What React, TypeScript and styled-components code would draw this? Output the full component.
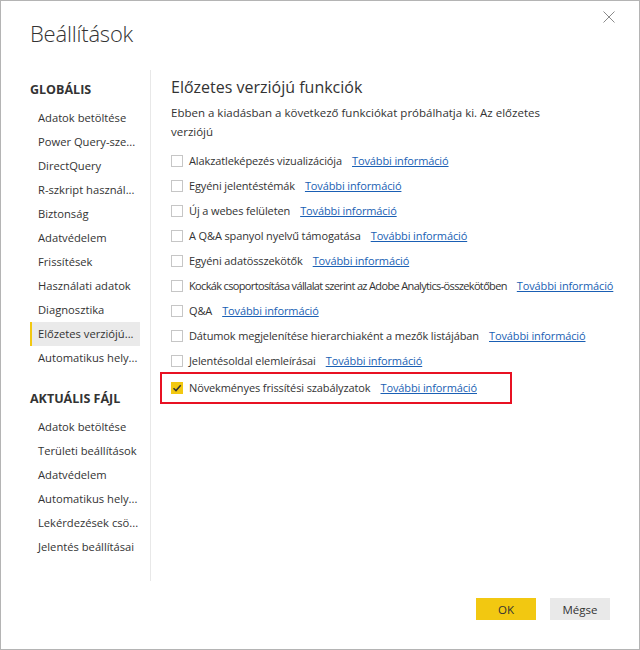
import React from "react";
import styled, { createGlobalStyle } from "styled-components";

const Global = createGlobalStyle`
  html, body { margin: 0; padding: 0; background: #fff; }
  body { font-family: "Open Sans", "Noto Sans", sans-serif; color: #333; }
  * { box-sizing: border-box; }
`;

const Window = styled.div`
  width: 640px;
  height: 650px;
  border: 1px solid #b4b4b4;
  display: flex;
  flex-direction: column;
  background: #fff;
  overflow: hidden;
`;

const Header = styled.div`
  display: flex;
  justify-content: space-between;
  align-items: flex-start;
  height: 69px;
  padding: 17px 22px 0 29px;
`;

const Title = styled.h1`
  margin: 0;
  font-weight: 300;
  font-size: 22px;
  line-height: 30px;
  color: #333;
  letter-spacing: -0.2px;
`;

const Close = styled.button`
  border: 0;
  background: transparent;
  padding: 0;
  margin-top: -9px;
  width: 16px;
  height: 16px;
  display: flex;
  align-items: center;
  justify-content: center;
`;

const Body = styled.div`
  display: flex;
  height: 511px;
`;

const Sidebar = styled.nav`
  flex: none;
  width: 121px;
  margin-left: 29px;
  border-right: 1px solid #e8e8e8;
  padding-top: 8px;
`;

const Section = styled.div`
  font-weight: 700;
  font-size: 12.5px;
  color: #333;
  height: 24px;
  line-height: 24px;
  margin-bottom: 4px;
`;

const NavItem = styled.div<{ $active?: boolean }>`
  height: 24px;
  line-height: 24px;
  font-size: 11.2px;
  padding-left: 6px;
  width: 110px;
  white-space: nowrap;
  color: #333;
  background: ${(p) => (p.$active ? "#eaeaea" : "transparent")};
  border-left: 2px solid ${(p) => (p.$active ? "#f2c811" : "transparent")};
`;

const Group = styled.div`
  margin-bottom: 17px;
`;

const Content = styled.section`
  flex: 1;
  min-width: 0;
  padding: 5px 0 0 20px;
`;

const Heading = styled.h2`
  margin: 0;
  font-weight: 400;
  font-size: 16px;
  line-height: 24px;
  color: #333;
`;

const Desc = styled.p`
  margin: 4px 0 7px;
  font-size: 11.5px;
  line-height: 19px;
  width: 400px;
  color: #333;
`;

const Row = styled.label<{ $highlight?: boolean; $condensed?: boolean }>`
  display: flex;
  align-items: center;
  height: 25px;
  font-size: 11px;
  letter-spacing: ${(p) => (p.$condensed ? "-0.65px" : "-0.12px")};
  color: #333;
  white-space: nowrap;
  width: fit-content;
  ${(p) =>
    p.$highlight
      ? `outline: 2px solid #e81123; margin: 0.5px 0 0 -9px; padding-left: 9px; height: 28px; width: 348px;`
      : ""}
`;

const Box = styled.span<{ $checked?: boolean }>`
  width: 12px;
  height: 12px;
  border: 1px solid ${(p) => (p.$checked ? "#f2c811" : "#c6c6c6")};
  background: ${(p) => (p.$checked ? "#f2c811" : "#fff")};
  margin-right: 6px;
  display: inline-flex;
  align-items: center;
  justify-content: center;
  flex: none;
`;

const Link = styled.a`
  color: #1a5fb4;
  text-decoration: underline;
  margin-left: 10px;
  letter-spacing: -0.12px;
  cursor: pointer;
`;

const Footer = styled.div`
  flex: 1;
  display: flex;
  justify-content: flex-end;
  align-items: flex-start;
  gap: 14px;
  padding: 17px 29px 0 0;
`;

const Button = styled.button<{ $primary?: boolean }>`
  width: 60px;
  height: 22px;
  border: 0;
  font-family: inherit;
  font-size: 11.5px;
  color: #333;
  background: ${(p) => (p.$primary ? "#f2c811" : "#e9e9e9")};
`;

const globalItems = [
  "Adatok betöltése",
  "Power Query-sze...",
  "DirectQuery",
  "R-szkript használ...",
  "Biztonság",
  "Adatvédelem",
  "Frissítések",
  "Használati adatok",
  "Diagnosztika",
  "Előzetes verziójú...",
  "Automatikus hely...",
];

const fileItems = [
  "Adatok betöltése",
  "Területi beállítások",
  "Adatvédelem",
  "Automatikus hely...",
  "Lekérdezések csö...",
  "Jelentés beállításai",
];

const features = [
  "Alakzatleképezés vizualizációja",
  "Egyéni jelentéstémák",
  "Új a webes felületen",
  "A Q&A spanyol nyelvű támogatása",
  "Egyéni adatösszekötők",
  "Kockák csoportosítása vállalat szerint az Adobe Analytics-összekötőben",
  "Q&A",
  "Dátumok megjelenítése hierarchiaként a mezők listájában",
  "Jelentésoldal elemleírásai",
];

export default function App() {
  return (
    <>
      <Global />
      <Window>
        <Header>
          <Title>Beállítások</Title>
          <Close aria-label="Bezárás">
            <svg width="12" height="12" viewBox="0 0 12 12">
              <path d="M0.5 0.5 L11.5 11.5 M11.5 0.5 L0.5 11.5" stroke="#8a8a8a" strokeWidth="1" />
            </svg>
          </Close>
        </Header>
        <Body>
          <Sidebar>
            <Group>
              <Section>GLOBÁLIS</Section>
              {globalItems.map((t, i) => (
                <NavItem key={t} $active={i === 9}>
                  {t}
                </NavItem>
              ))}
            </Group>
            <Group>
              <Section>AKTUÁLIS FÁJL</Section>
              {fileItems.map((t) => (
                <NavItem key={t}>{t}</NavItem>
              ))}
            </Group>
          </Sidebar>
          <Content>
            <Heading>Előzetes verziójú funkciók</Heading>
            <Desc>
              Ebben a kiadásban a következő funkciókat próbálhatja ki. Az előzetes verziójú
            </Desc>
            {features.map((f) => (
              <Row key={f} $condensed={f.length > 60}>
                <Box />
                {f}
                <Link>További információ</Link>
              </Row>
            ))}
            <Row $highlight>
              <Box $checked>
                <svg width="10" height="10" viewBox="0 0 10 10">
                  <path d="M1.5 5.2 L4 7.6 L8.7 2.2" fill="none" stroke="#333" strokeWidth="1.5" />
                </svg>
              </Box>
              Növekményes frissítési szabályzatok
              <Link>További információ</Link>
            </Row>
          </Content>
        </Body>
        <Footer>
          <Button $primary>OK</Button>
          <Button>Mégse</Button>
        </Footer>
      </Window>
    </>
  );
}
